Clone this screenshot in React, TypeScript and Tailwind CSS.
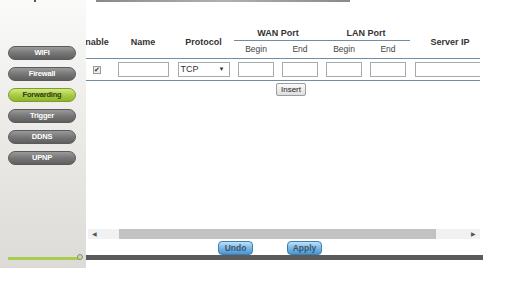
import React from 'react';

const navItems = ['WIFI', 'Firewall', 'Forwarding', 'Trigger', 'DDNS', 'UPNP'];

const NavButton = ({ label, active }: { label: string; active?: boolean }) => (
    <button
        className={`h-[14px] w-[68px] rounded-full border text-[7.5px] font-bold leading-none tracking-[-0.2px] ${
            active
                ? 'border-[#7e9c2c] bg-gradient-to-b from-[#d3ea82] via-[#a9cd45] to-[#8fb62c] text-[#2e3a12]'
                : 'border-[#5a5a5a] bg-gradient-to-b from-[#9a9a9a] via-[#777777] to-[#5f5f5f] text-white'
        }`}
    >
        {label}
    </button>
);

const Field = ({ w }: { w: string }) => (
    <input className={`${w} h-[15px] border border-[#a9a9a9] bg-white`} />
);

const PortCell = () => (
    <div className="flex h-full w-[44px] items-center justify-center">
        <Field w="w-[36px]" />
    </div>
);

const BlueButton = ({ label }: { label: string }) => (
    <button className="h-[14px] w-[35px] rounded-[4px] border border-[#3f7fb3] bg-gradient-to-b from-[#bfe1f6] via-[#7ab9e4] to-[#4a95cf] text-[8.5px] font-bold leading-none text-[#3a5670]">
        {label}
    </button>
);

export default function App() {
    return (
        <div className="relative flex h-[300px] w-[510px] overflow-hidden bg-white text-[#333]" style={{ fontFamily: '"Liberation Sans", Arial, sans-serif' }}>
            {/* sidebar */}
            <div className="relative flex h-[268px] w-[86px] shrink-0 flex-col bg-gradient-to-b from-[#fafaf9] via-[#ebeae7] to-[#dcdbd7]">
                <div className="ml-[34px] h-[2px] w-[2px] bg-[#555]" />
                <div className="mt-[44px] flex flex-col gap-[7px] pl-[8px]">
                    {navItems.map(n => <NavButton key={n} label={n} active={n === 'Forwarding'} />)}
                </div>
                <div className="mt-auto mb-[8px] ml-[8px] h-[3px] w-[72px] bg-[#a8cd4e]" />
                <div className="absolute left-[77px] top-[254px] h-[6px] w-[6px] rounded-full border border-[#8a8a8a] bg-[#c9e08a]" />
            </div>

            {/* main */}
            <div className="flex flex-1 flex-col">
                <div className="ml-[10px] h-[2px] w-[254px] bg-gradient-to-r from-[#8a8a8a] via-[#b0b0b0] to-[#8a8a8a]" />

                <div className="mt-[26px] w-[394px] overflow-hidden">
                    <div className="-ml-[6px] w-[420px]">
                        {/* header */}
                        <div className="flex h-[31px] border-b border-[#6f8ea5] text-[9px]">
                            <div className="flex w-[33px] items-center justify-center pr-[5px] font-bold">Enable</div>
                            <div className="flex w-[60px] items-center justify-center font-bold">Name</div>
                            <div className="flex w-[61px] items-center justify-center font-bold">Protocol</div>
                            {['WAN Port', 'LAN Port'].map(g => (
                                <div key={g} className="flex w-[88px] flex-col">
                                    <div className="flex h-[13px] items-center justify-center border-b border-[#6f8ea5] font-bold">{g}</div>
                                    <div className="flex flex-1 text-[8.5px] text-[#444]">
                                        <div className="flex w-[44px] items-center justify-center">Begin</div>
                                        <div className="flex w-[44px] items-center justify-center">End</div>
                                    </div>
                                </div>
                            ))}
                            <div className="flex w-[80px] items-center justify-center font-bold">Server IP</div>
                        </div>

                        {/* row */}
                        <div className="flex h-[22px] items-center border-b border-[#6f8ea5]">
                            <div className="flex w-[33px] items-center justify-center">
                                <div className="flex h-[8px] w-[8px] items-center justify-center border border-[#9a9a9a] bg-[#eeeeee] text-[7px] leading-none text-[#333]">✔</div>
                            </div>
                            <div className="flex w-[60px] justify-center">
                                <Field w="w-[51px]" />
                            </div>
                            <div className="flex w-[61px] justify-center">
                                <div className="flex h-[15px] w-[52px] items-center justify-between border border-[#a9a9a9] bg-white pl-[2px] pr-[4px] text-[9px]">
                                    <span>TCP</span>
                                    <span className="text-[6px]">▼</span>
                                </div>
                            </div>
                            <PortCell />
                            <PortCell />
                            <PortCell />
                            <PortCell />
                            <div className="flex w-[80px] justify-end">
                                <Field w="w-[75px]" />
                            </div>
                        </div>
                    </div>
                </div>

                <button className="ml-[190px] mt-[2px] h-[13px] w-[30px] rounded-[2px] border border-[#9c9c9c] bg-gradient-to-b from-[#fafafa] to-[#dedede] text-[8px] leading-none text-[#222]">
                    Insert
                </button>

                {/* scrollbar */}
                <div className="ml-[2px] mt-[133px] flex h-[10px] w-[392px] items-center bg-[#f1f1f1]">
                    <div className="flex w-[31px] justify-start pl-[4px] text-[6px] text-[#555]">◀</div>
                    <div className="h-[10px] w-[317px] bg-[#c2c2c2]" />
                    <div className="flex flex-1 justify-end pr-[4px] text-[6px] text-[#555]">▶</div>
                </div>

                <div className="ml-[132px] mt-[2px] flex gap-[34px]">
                    <BlueButton label="Undo" />
                    <BlueButton label="Apply" />
                </div>

                <div className="-ml-[6px] h-[5px] w-[403px] bg-[#5b5b5b]" />
            </div>
        </div>
    );
}
